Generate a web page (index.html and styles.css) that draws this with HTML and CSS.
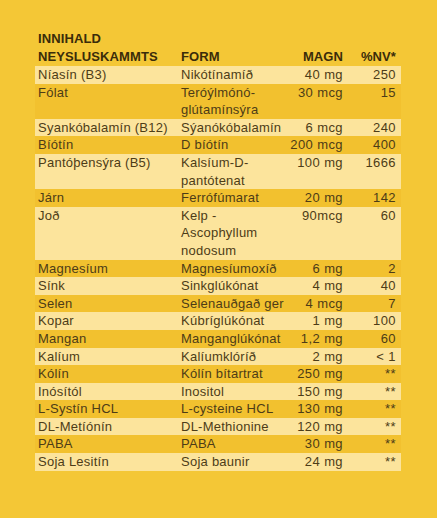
FILE: index.html
```html
<!DOCTYPE html>
<html lang="is">

<head>
    <meta charset="UTF-8">
    <meta name="viewport" content="width=device-width, initial-scale=1.0">
    <title>Innihald</title>
    <link rel="stylesheet" href="styles.css">
</head>

<body>
    <div class="label">
        <table class="facts">
            <thead>
                <tr>
                    <th class="col-name">INNIHALD<br>NEYSLUSKAMMTS</th>
                    <th class="col-form">FORM</th>
                    <th class="col-amount">MAGN</th>
                    <th class="col-nv">%NV*</th>
                </tr>
            </thead>
            <tbody>
                <tr><td>Níasín (B3)</td><td>Nikótínamíð</td><td class="num">40 mg</td><td class="num">250</td></tr>
                <tr><td>Fólat</td><td>Teróýlmónó-<br>glútamínsýra</td><td class="num">30 mcg</td><td class="num">15</td></tr>
                <tr><td>Syankóbalamín (B12)</td><td>Sýanókóbalamín</td><td class="num">6 mcg</td><td class="num">240</td></tr>
                <tr><td>Bíótín</td><td>D bíótín</td><td class="num">200 mcg</td><td class="num">400</td></tr>
                <tr><td>Pantóþensýra (B5)</td><td>Kalsíum-D-<br>pantótenat</td><td class="num">100 mg</td><td class="num">1666</td></tr>
                <tr><td>Járn</td><td>Ferrófúmarat</td><td class="num">20 mg</td><td class="num">142</td></tr>
                <tr><td>Joð</td><td>Kelp -<br>Ascophyllum<br>nodosum</td><td class="num">90mcg</td><td class="num">60</td></tr>
                <tr><td>Magnesíum</td><td>Magnesíumoxíð</td><td class="num">6 mg</td><td class="num">2</td></tr>
                <tr><td>Sínk</td><td>Sinkglúkónat</td><td class="num">4 mg</td><td class="num">40</td></tr>
                <tr><td>Selen</td><td>Selenauðgað ger</td><td class="num">4 mcg</td><td class="num">7</td></tr>
                <tr><td>Kopar</td><td>Kúbríglúkónat</td><td class="num">1 mg</td><td class="num">100</td></tr>
                <tr><td>Mangan</td><td>Manganglúkónat</td><td class="num">1,2 mg</td><td class="num">60</td></tr>
                <tr><td>Kalíum</td><td>Kalíumklóríð</td><td class="num">2 mg</td><td class="num">&lt; 1</td></tr>
                <tr><td>Kólín</td><td>Kólín bítartrat</td><td class="num">250 mg</td><td class="num">**</td></tr>
                <tr><td>Inósítól</td><td>Inositol</td><td class="num">150 mg</td><td class="num">**</td></tr>
                <tr><td>L-Systín HCL</td><td>L-cysteine HCL</td><td class="num">130 mg</td><td class="num">**</td></tr>
                <tr><td>DL-Metíónín</td><td>DL-Methionine</td><td class="num">120 mg</td><td class="num">**</td></tr>
                <tr><td>PABA</td><td>PABA</td><td class="num">30 mg</td><td class="num">**</td></tr>
                <tr><td>Soja Lesitín</td><td>Soja baunir</td><td class="num">24 mg</td><td class="num">**</td></tr>
            </tbody>
        </table>
    </div>
</body>

</html>
```

FILE: styles.css
```css
* {
    margin: 0;
    padding: 0;
    box-sizing: border-box;
}

body {
    background-color: #f4c736;
    font-family: 'Liberation Sans', Arial, sans-serif;
    color: #4d3c17;
    height: 100vh;
}

.label {
    padding: 30px 0 0 35px;
}

.facts {
    border-collapse: collapse;
    table-layout: fixed;
    width: 366px;
    font-size: 13px;
}

.facts th {
    font-weight: bold;
    line-height: 18px;
    letter-spacing: 0.1px;
    vertical-align: bottom;
    text-align: left;
    color: #3a2c0a;
}

.facts td {
    line-height: 17.6px;
    letter-spacing: 0.25px;
    vertical-align: top;
    white-space: nowrap;
}

.col-name {
    width: 146px;
    padding-left: 3px;
}

.col-form {
    width: 109px;
}

.col-amount {
    width: 53px;
}

.col-nv {
    width: 58px;
    padding-right: 5px;
}

.facts th.col-amount,
.facts th.col-nv {
    text-align: right;
}

.facts td:first-child {
    padding-left: 3px;
}

.facts td:last-child {
    padding-right: 5px;
}

.facts .num {
    text-align: right;
    letter-spacing: 0.4px;
}

.facts tbody tr:nth-child(odd) {
    background-color: #fce49c;
}

.facts tbody tr:nth-child(even) {
    background-color: #f2c12f;
}
```
